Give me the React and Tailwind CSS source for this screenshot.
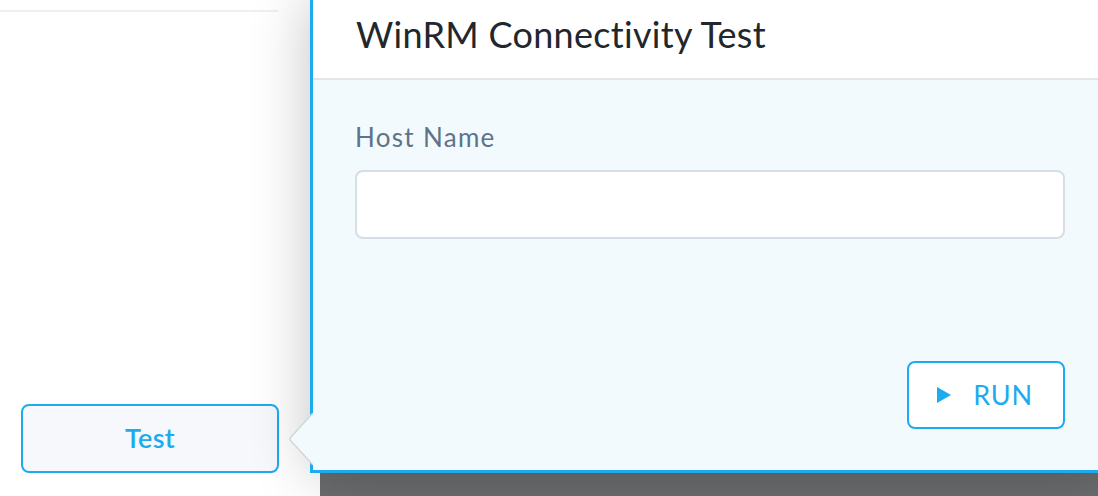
export default function App() {
  const font = { fontFamily: "Lato, 'Open Sans', sans-serif" };
  return (
    <div className="relative w-[1098px] h-[496px] overflow-hidden bg-[#6b6c6d]" style={font}>
      {/* left panel */}
      <div className="w-[320px] h-full bg-white flex flex-col">
        <div className="mt-[10px] w-[278px] h-[2px] bg-[#eef0f4]" />
        <div className="flex-1" />
        <div className="pl-[21px] pb-[23px]">
          <button className="w-[258px] h-[69px] rounded-[8px] border-2 border-[#1dabf0] bg-[#f6f8fb] text-[#1dabf0] text-[27px] font-semibold tracking-[0.3px]">
            Test
          </button>
        </div>
      </div>

      {/* popover */}
      <div className="absolute left-[310px] top-[-3px] w-[800px] h-[476px] border-[3px] border-[#1dabf0] bg-[#f2fafd] flex flex-col shadow-[0_0_55px_rgba(0,0,0,0.24)]">
        <div className="h-[80px] shrink-0 bg-white border-b-2 border-[#e2e6ea] flex items-start pl-[43px] pt-[16px]">
          <h1 className="text-[36px] text-[#22262d] font-normal leading-none tracking-[0.3px]">WinRM Connectivity Test</h1>
        </div>
        <div className="flex-1 flex flex-col px-[42px] pt-[41px] pb-[41px]">
          <label className="text-[26px] text-[#5f7388] leading-[32px] font-normal tracking-[1.3px]">Host Name</label>
          <div className="mt-[17px] h-[69px] w-full rounded-[8px] border-2 border-[#d6dde4] bg-white" />
          <div className="flex-1" />
          <div className="flex justify-end">
            <button className="w-[158px] h-[68px] rounded-[8px] border-2 border-[#1dabf0] bg-white text-[#1dabf0] text-[27px] flex items-center justify-center gap-[22px] tracking-[0.8px]">
              <svg width="14" height="16" viewBox="0 0 14 16" className="ml-[-2px]">
                <path d="M0 0 L14 8 L0 16 Z" fill="#1dabf0" />
              </svg>
              <span>RUN</span>
            </button>
          </div>
        </div>
        {/* arrow */}
        <svg className="absolute left-[-25px] top-[413px]" width="25" height="52" viewBox="0 0 25 52">
          <path d="M25 0 L3 24 Q1 26 3 28 L25 52" fill="#f2fafd" stroke="#d2d6da" strokeWidth="1.5" />
        </svg>
      </div>
    </div>
  );
}
